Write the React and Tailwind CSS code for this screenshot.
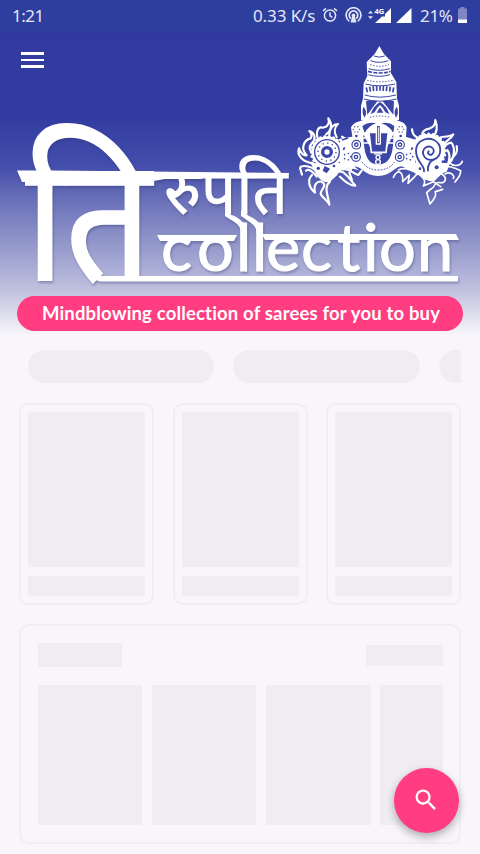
import React from "react";

function StatusBar() {
  return (
    <div className="flex h-[30px] items-center text-[17px] leading-none text-[#e4e6f4]">
      <span className="ml-[12px] w-[241px] tracking-[-0.5px]">1:21</span>
      <span className="w-[63px] whitespace-nowrap tracking-[-0.1px]">0.33 K/s</span>
      <svg className="ml-[6px] h-[16px] w-[16px]" viewBox="0 0 16 16" fill="none" stroke="currentColor" strokeWidth="1.5">
        <circle cx="8" cy="8.5" r="5.6" />
        <path d="M8 5.2v3.6l2.4 1.5M1 3.8 4 1.3M15 3.8 12 1.3" />
      </svg>
      <svg className="ml-[7px] h-[17px] w-[17px]" viewBox="0 0 17 17" fill="none" stroke="currentColor" strokeWidth="1.7">
        <path d="M4.3 14.2a7.4 7.4 0 1 1 8.4 0M5.8 11.6a4.3 4.3 0 1 1 5.4 0" />
        <path d="M5.6 15.5 7 9.6a1.9 1.9 0 1 1 3 0l1.4 5.9Z" fill="currentColor" stroke="none" />
      </svg>
      <svg className="ml-[5px] h-[18px] w-[26px]" viewBox="0 0 26 18">
        <path d="M1 7.6 3.5 4.8 6 7.6ZM1 10.2 3.5 13 6 10.2Z" fill="currentColor" />
        <path d="M24 2v15H8L15 10.5h3V8Z" fill="#fff" />
        <text x="7.5" y="7.8" fontSize="7.5" fontWeight="700" fill="#fff">4G</text>
      </svg>
      <svg className="ml-[3px] h-[18px] w-[16px]" viewBox="0 0 16 18"><path d="M15.5 2v15H0Z" fill="#fff" /></svg>
      <span className="ml-[8px] w-[33px] whitespace-nowrap tracking-[-0.3px]">21%</span>
      <svg className="ml-[5px] h-[16px] w-[9px]" viewBox="0 0 9 16">
        <path d="M2.5 0h4v1.5H9V16H0V1.5h2.5Z" fill="#7f87c6" />
        <path d="M0 12.5h9V16H0Z" fill="#fff" />
      </svg>
    </div>
  );
}

const rim = (cx, cy, r, n, d) =>
  Array.from({ length: n }, (_, i) => {
    const a = (i / n) * Math.PI * 2;
    return <circle key={i} cx={cx + Math.cos(a) * r} cy={cy + Math.sin(a) * r} r={d} />;
  });

function Emblem() {
  const blue = "#3b46a6";
  return (
    <svg x="290" y="40" width="180" height="170" viewBox="0 0 540 510">
      <g fill="none" stroke="#fff" strokeWidth="6.5" strokeLinecap="round" strokeLinejoin="round">
        {/* left flames */}
        <path d="M70 370C35 365 20 345 27 325 32 340 42 348 50 346 30 325 42 300 62 295 68 285 64 279 58 273 78 280 77 300 65 310 52 325 62 335 70 342M85 300C75 275 85 258 98 263 112 262 120 250 115 235 130 255 122 275 108 283M118 285C118 265 130 252 144 252 132 262 132 278 140 292M150 300C162 310 164 295 156 290 175 298 178 312 165 326" />
        <path d="M32 380C45 375 65 380 75 390M30 384 36 404M48 392C55 385 70 395 80 410M66 405C50 420 58 445 75 458 70 435 80 422 95 425 115 435 90 450 92 462 98 475 112 480 118 494 114 465 100 440 120 425" />
        <path d="M135 400C150 385 165 400 178 415L196 437C180 437 165 425 150 410M160 388C178 384 188 400 205 405L215 392M178 398 186 420" />
        {/* right flames */}
        <path d="M366 268C368 290 385 297 396 292M400 296C390 275 405 268 420 265 435 260 436 250 436 240 444 262 440 280 428 292M440 300C445 285 470 295 490 283 482 300 462 304 458 318 465 322 470 308 484 308 498 325 492 360 474 372 482 350 480 340 472 330M500 318C506 345 485 350 478 368" />
        <path d="M478 368C490 380 510 380 517 364M450 390C470 370 495 385 512 392 512 410 500 418 495 426M465 402C485 392 495 410 490 415M455 402C475 415 465 430 450 428 430 425 438 440 424 446L410 458 420 492C430 480 440 470 436 455L458 448" strokeWidth="5" />
        <path d="M390 398C400 415 410 425 400 438L430 425 452 440M310 412C325 380 340 400 338 425L358 405 354 430 374 410C385 390 400 415 420 420M325 390C345 380 365 390 380 400" strokeWidth="5" />
      </g>
      <g fill="#fff">
        <path d="M62 370C85 370 165 370 178 366L208 392C180 380 150 385 142 405L120 425C105 430 85 420 75 395Z" />
        <path d="M368 366C390 380 440 365 480 370L470 395C450 400 445 415 430 425L400 418 375 395 340 385Z" />
        <path d="M150 296 186 290V392L150 372ZM346 290 380 300 374 384 344 382Z" />
        <path d="M268 18 282 42 303 64V100L319 126 321 175 327 198V240H213V198L219 175 221 130 232 108 230 66 254 42Z" />
        <path d="M183 262C195 240 220 248 226 232H312C318 248 343 240 350 262L348 290 362 315 350 342 360 362 345 382C315 370 310 408 264 408 220 408 212 370 186 382L166 360 180 340 174 314 187 290Z" />
        <circle cx="111" cy="336" r="47" /><circle cx="416" cy="332" r="50" />
        {rim(111, 336, 47, 22, 4.5)}{rim(416, 332, 50, 24, 4.5)}
      </g>
      <path d="M156 300 174 294M164 322 160 330M368 322 364 330" stroke={blue} strokeWidth="5" />
      {/* tiered crown */}
      <g fill="none" stroke={blue} strokeWidth="3">
        <path d="M252 48Q268 55 284 48M241 62Q268 72 295 62M236 86Q268 96 299 86M235 104Q268 114 300 104M226 132Q268 143 315 132M224 165Q268 178 318 165M222 177Q268 190 320 177" />
        <path d="M241 74Q268 84 297 74M232 121Q268 130 310 121M240 232Q268 224 300 232" strokeDasharray="4 5" />
        <path d="M228 150Q268 140 313 150" strokeWidth="15" strokeDasharray="5 5" />
        <path d="M234 94Q268 104 302 94" strokeWidth="5" strokeDasharray="12 4" />
      </g>
      <g fill={blue}>
        <path d="M228 184Q238 178 262 184L232 224ZM312 184Q298 178 278 184L310 224Z" />
        <path d="M242 222Q250 198 270 186 290 198 298 222L286 217Q282 205 270 195 258 205 254 217Z" />
        <path d="M270 202 280 218H260ZM220 200Q234 213 224 233 214 220 220 200ZM321 200Q308 213 318 233 328 220 321 200Z" />
        {/* face with tilak */}
        <path d="M217 258Q235 244 258 250 232 260 224 280ZM313 258Q296 244 274 250 302 260 310 280Z" />
        <path d="M220 286 310 286C310 330 306 373 264 374 226 373 222 330 220 286Z" />
      </g>
      <path d="M217 277 245 285V330M313 277 287 285V330M218 294H240M291 294H313M221 309H240M291 309H309" stroke="#fff" strokeWidth="4" />
      <path d="M237 277H295L288 337H244Z" fill={blue} stroke="#fff" strokeWidth="5" />
      <path d="M252 262 265 248 279 262V279H252Z" fill="#fff" />
      <path d="M259 256H271V312H259Z" fill={blue} stroke="#fff" strokeWidth="4" />
      <path d="M265 262V306" stroke="#fff" strokeWidth="3" />
      <g fill="none" stroke="#fff" strokeWidth="4"><circle cx="264" cy="352" r="6" /><circle cx="264" cy="366" r="7" /><path d="M252 342H276" /></g>
      <path d="M216 366Q234 390 264 390 296 390 314 366" fill="none" stroke={blue} strokeWidth="3" strokeDasharray="5 4" />
      {/* ear rings */}
      {[[199, 314], [198, 351], [330, 314], [329, 351]].map(([x, y]) => (
        <g key={x + "-" + y} fill="none" stroke={blue}><circle cx={x} cy={y} r="13" strokeWidth="3.5" /><circle cx={x} cy={y} r="5" strokeWidth="4" /></g>
      ))}
      <g fill={blue}>{rim(199, 268, 9, 6, 2)}{rim(332, 268, 9, 6, 2)}<circle cx="199" cy="288" r="4" /><circle cx="332" cy="288" r="4" /></g>
      <g fill={blue}>{rim(172, 350, 10, 5, 2.5)}{rim(358, 350, 10, 5, 2.5)}</g>
      {/* discus */}
      <g fill="none" stroke={blue}>
        <circle cx="111" cy="336" r="37" strokeWidth="4" />
        <circle cx="111" cy="336" r="13" strokeWidth="10" />
        <circle cx="111" cy="336" r="27" strokeWidth="4" strokeDasharray="4 10.1" />
      </g>
      {/* conch */}
      <g fill="none" stroke={blue} strokeWidth="5.5" strokeLinecap="round">
        <path d="M402 394C405 375 376 365 378 330 380 302 410 290 432 300 456 312 458 348 432 358 404 366 390 338 406 323 424 312 440 332 426 343 418 347 411 340 416 334" />
        <path d="M432 358C420 364 412 374 414 392" />
      </g>
      <g fill={blue}><circle cx="85" cy="385" r="5" /><path d="M104 378 120 386 110 400 98 392Z" /><circle cx="132" cy="378" r="4" /><circle cx="390" cy="386" r="4" /><circle cx="440" cy="382" r="6" /></g>
    </svg>
  );
}

function Logo() {
  return (
    <svg className="block h-[266px] w-[480px] overflow-visible" viewBox="0 30 480 266" fill="#fff">
      <Emblem />
      <g className="drop-shadow-[1px_2px_1px_rgba(50,55,110,0.35)] font-['Noto_Sans_Devanagari','Noto_Sans','Lohit_Devanagari','FreeSans',sans-serif]">
        <g transform="translate(0 281) scale(1 1.08)">
          <text x="25" y="0" fontSize="163" fontWeight="500" textLength="127" lengthAdjust="spacingAndGlyphs">ति</text>
        </g>
        <text x="164" y="214" fontSize="65" fontWeight="500" textLength="124" lengthAdjust="spacingAndGlyphs">रुपति</text>
        {/* head bars */}
        <path d="M17 170.500 50 170.500 289 173 286 178 176 177 148 182H22Z" />
        <path d="M157 235H237L234 241H160ZM262 234H456L459 240H265Z" />
        {/* ribbons joining both lines */}
        <path d="M225 212 232 215C241 219 247 224 247 236V272L241 268V232C240 223 233 222 225 216Z" />
        <path d="M241 210 249 216C258 220 263 225 263 236V272L257 268V233C256 224 249 222 241 216Z" />
        <text x="161 197 236 252 266 301 337 363 379 417" y="271" fontSize="65" stroke="#fff" strokeWidth="1" className="font-['Lato',sans-serif]">collection</text>
        <path d="M92 276H458V281.500H100C97 281 94 279 92 276Z" />
      </g>
    </svg>
  );
}

function ProductCard() {
  return (
    <div className="flex h-[202px] w-[135px] flex-col gap-[9px] rounded-[10px] border-2 border-[#f0eef2] px-[7px] pt-[7px]">
      <div className="h-[155px] bg-[#efedf0]" />
      <div className="h-[20px] bg-[#efedf0]" />
    </div>
  );
}

export default function App() {
  return (
    <div className="relative h-[854px] w-[480px] overflow-hidden bg-[#f8f6fa] font-['Noto_Sans',sans-serif]">
      <header className="relative h-[335px] bg-[linear-gradient(to_bottom,#2d3e9f_0px,#2d3e9f_28px,#323a9f_36px,#323ca0_115px,#434dab_165px,#6f75ba_205px,#9da1cf_255px,#c0c1df_290px,#f8f6fa_335px)]">
        <StatusBar />
        <Logo />
        <button aria-label="Menu" className="absolute left-[21px] top-[52px] flex w-[23px] flex-col gap-[4px]">
          <span className="h-[2.5px] bg-white" />
          <span className="h-[2.5px] bg-white" />
          <span className="h-[2.5px] bg-white" />
        </button>
        <div className="relative mx-[17px] flex h-[35px] items-center justify-center rounded-full bg-[#ff3d80] pl-[2px] text-white">
          <span className="whitespace-nowrap font-['Lato',sans-serif] text-[18.5px] font-bold tracking-[0.17px]">Mindblowing collection of sarees for you to buy</span>
        </div>
      </header>
      <main>
        <div className="ml-[28px] mt-[15px] flex w-[433px] gap-[19px] overflow-hidden">
          <div className="h-[33px] w-[186px] shrink-0 rounded-full bg-[#efedf0]" />
          <div className="h-[33px] w-[187px] shrink-0 rounded-full bg-[#efedf0]" />
          <div className="h-[33px] w-[186px] shrink-0 rounded-full bg-[#efedf0]" />
        </div>
        <div className="mx-[19px] mt-[19.5px] flex justify-between">
          <ProductCard /><ProductCard /><ProductCard />
        </div>
        <section className="mx-[19px] mt-[19.5px] h-[220px] rounded-[10px] border-2 border-[#f0eef2] px-[16.5px] pt-[17px]">
          <div className="flex items-center justify-between">
            <div className="h-[24px] w-[84px] bg-[#efedf0]" />
            <div className="h-[21px] w-[77px] bg-[#efedf0]" />
          </div>
          <div className="mt-[18px] flex gap-[9.5px] overflow-hidden">
            <div className="h-[140px] w-[104.7px] shrink-0 bg-[#efedf0]" />
            <div className="h-[140px] w-[104.7px] shrink-0 bg-[#efedf0]" />
            <div className="h-[140px] w-[104.7px] shrink-0 bg-[#efedf0]" />
            <div className="h-[140px] w-[104.7px] shrink-0 bg-[#efedf0]" />
          </div>
        </section>
      </main>
      <button aria-label="Search" className="absolute left-[393.5px] top-[767.5px] flex h-[65px] w-[65px] items-center justify-center rounded-full bg-[#ff3d80] text-white shadow-[0_4px_8px_rgba(0,0,0,0.3)]">
        <svg className="h-[28px] w-[28px]" viewBox="0 0 24 24" fill="currentColor">
          <path d="M15.5 14h-.79l-.28-.27A6.471 6.471 0 0 0 16 9.5 6.5 6.5 0 1 0 9.5 16c1.61 0 3.09-.59 4.23-1.57l.27.28v.79l5 4.99L20.49 19l-4.99-5zm-6 0C7.01 14 5 11.99 5 9.5S7.01 5 9.5 5 14 7.01 14 9.5 11.99 14 9.5 14z" />
        </svg>
      </button>
    </div>
  );
}
